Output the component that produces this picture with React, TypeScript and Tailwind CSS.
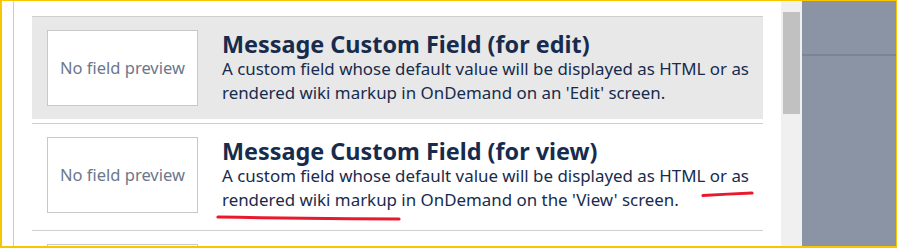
const FIELDS = [
  {
    title: "Message Custom Field (for edit)",
    lines: [
      "A custom field whose default value will be displayed as HTML or as",
      "rendered wiki markup in OnDemand on an 'Edit' screen.",
    ],
    selected: true,
  },
  {
    title: "Message Custom Field (for view)",
    lines: [
      "A custom field whose default value will be displayed as HTML or as",
      "rendered wiki markup in OnDemand on the 'View' screen.",
    ],
    selected: false,
  },
];

function FieldCard({ title, lines, selected }: { title: string; lines: string[]; selected: boolean }) {
  return (
    <div
      className={`mb-[4px] flex border-t border-[#cfcfcf] px-[15px] py-[13px] ${selected ? "bg-[#e8e8e8]" : "bg-white"}`}
    >
      <div className="flex h-[76px] w-[151px] shrink-0 items-center justify-center border border-[#c8c8c8] bg-white text-[16.5px] text-[#6b778c]">
        No field preview
      </div>
      <div className="ml-[24px] min-w-0 whitespace-nowrap pt-[1px] text-[#172b4d]">
        <h3 className="text-[23.4px] font-bold leading-[26px]">{title}</h3>
        {lines.map((line) => (
          <p key={line} className="text-[16.9px] leading-[24px]">
            {line}
          </p>
        ))}
      </div>
    </div>
  );
}

export default function App() {
  return (
    <div
      className="relative flex h-[248px] w-[897px] overflow-hidden border-t border-r border-b-2 border-l-2 border-[#f7c600] bg-white"
      style={{ fontFamily: '"Noto Sans", "Open Sans", sans-serif' }}
    >
      <div className="flex flex-1">
        <div className="ml-[11px] w-px bg-[#cccccc]" />
        <div className="ml-[18px] w-[731px] pt-[15px]">
          {FIELDS.map((field) => (
            <FieldCard key={field.title} {...field} />
          ))}
          {/* next card, only its top edge is in view */}
          <div className="flex border-t border-[#cfcfcf] px-[15px] py-[13px]">
            <div className="h-[76px] w-[151px] shrink-0 border border-[#c8c8c8] bg-white" />
          </div>
        </div>
      </div>

      <div className="w-[21px] shrink-0 bg-[#f0f0f0] pl-[2px] pt-[11px]">
        <div className="h-[102px] w-[17px] bg-[#c1c1c1]" />
      </div>

      <div className="w-[94px] shrink-0 bg-[#8b94a4] pt-[53px]">
        <div className="h-[2px] bg-[#7b8595]" />
      </div>

      <svg className="pointer-events-none absolute left-[-2px] top-[-1px]" width="897" height="248">
        <path d="M703 195.5 Q728 194 752 193" stroke="#e8192c" strokeWidth="3.2" fill="none" strokeLinecap="round" />
        <path d="M218 217 Q300 218.5 399 219" stroke="#e8192c" strokeWidth="3.2" fill="none" strokeLinecap="round" />
      </svg>
    </div>
  );
}
